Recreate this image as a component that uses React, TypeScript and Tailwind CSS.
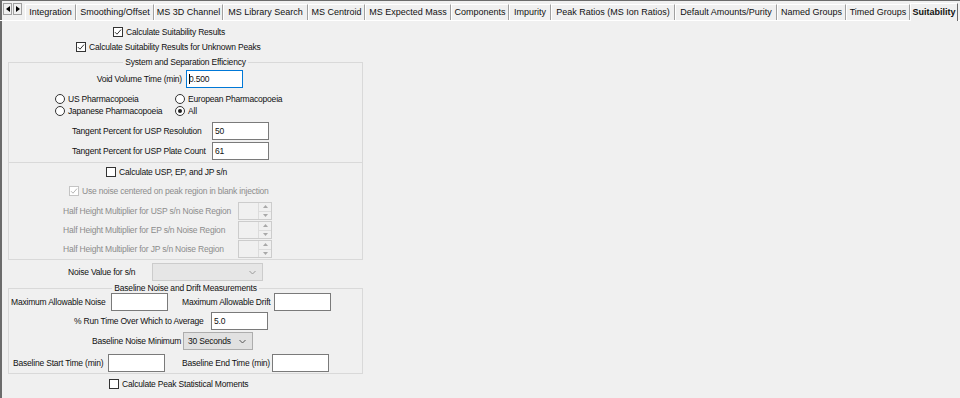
import React from 'react';

const tabs = [
  { name: 'Integration', w: 'w-[51px]' },
  { name: 'Smoothing/Offset', w: 'w-[78px]' },
  { name: 'MS 3D Channel', w: 'w-[69px]' },
  { name: 'MS Library Search', w: 'w-[85px]' },
  { name: 'MS Centroid', w: 'w-[57px]' },
  { name: 'MS Expected Mass', w: 'w-[86px]' },
  { name: 'Components', w: 'w-[58px]' },
  { name: 'Impurity', w: 'w-[42px]' },
  { name: 'Peak Ratios (MS Ion Ratios)', w: 'w-[124px]' },
  { name: 'Default Amounts/Purity', w: 'w-[102px]' },
  { name: 'Named Groups', w: 'w-[69px]' },
  { name: 'Timed Groups', w: 'w-[64px]' },
]

const Checkbox = ({ checked = false, disabled = false }: { checked?: boolean; disabled?: boolean }) => (
  <span
    className={`w-[10px] h-[10px] shrink-0 border bg-white flex items-center justify-center ${
      disabled ? 'border-[#c4c4c4]' : 'border-[#333]'
    }`}
  >
    {checked && (
      <svg width="8" height="8" viewBox="0 0 8 8" fill="none">
        <path d="M1 4.2 L3 6.2 L7 1.6" stroke={disabled ? '#b5b5b5' : '#333'} strokeWidth="1" />
      </svg>
    )}
  </span>
)

const Radio = ({ checked = false }: { checked?: boolean }) => (
  <span className="w-[10px] h-[10px] shrink-0 rounded-full border border-[#333] bg-white flex items-center justify-center">
    {checked && <span className="w-[4px] h-[4px] rounded-full bg-[#222]" />}
  </span>
)

const TextBox = ({ value = '', focused = false }: { value?: string; focused?: boolean }) => (
  <div
    className={`w-[57px] h-[18px] shrink-0 bg-white border flex items-center pl-[2px] ${
      focused ? 'border-[#0078d7]' : 'border-[#7a7a7a]'
    }`}
  >
    {focused && <span className="w-px h-[10px] bg-black -mr-px" />}
    {value}
  </div>
)

const Spinner = () => (
  <div className="w-[34px] h-[18px] shrink-0 bg-[#f0f0f0] border border-[#cccccc] flex">
    <div className="flex-1" />
    <div className="w-[13px] flex flex-col border-l border-[#dcdcdc]">
      <div className="flex-1 flex items-center justify-center border-b border-[#dcdcdc]">
        <svg width="5" height="3" viewBox="0 0 5 3"><path d="M0 3 L2.5 0 L5 3 Z" fill="#a8a8a8" /></svg>
      </div>
      <div className="flex-1 flex items-center justify-center">
        <svg width="5" height="3" viewBox="0 0 5 3"><path d="M0 0 L2.5 3 L5 0 Z" fill="#a8a8a8" /></svg>
      </div>
    </div>
  </div>
)

const Chevron = ({ color }: { color: string }) => (
  <svg width="7" height="5" viewBox="0 0 7 5" fill="none">
    <path d="M0.5 1 L3.5 4 L6.5 1" stroke={color} strokeWidth="1" />
  </svg>
)

const App = () => {
  return (
    <div className="w-[960px] h-[398px] overflow-hidden bg-[#f0f0f0] shadow-[inset_2px_1px_0_#6b6b6b] flex flex-col text-[8.5px] tracking-[-0.2px] leading-none text-[#111] font-['Liberation_Sans',Arial,sans-serif]">
      {/* Tab strip */}
      <div className="h-[21px] shrink-0 flex items-end border-b border-white tracking-normal">
        <div className="self-start mt-[3px] ml-[3px] flex gap-px">
          <div className="w-[9px] h-[12px] border border-[#a0a0a0] bg-[#f0f0f0] flex items-center justify-center">
            <svg width="4" height="6" viewBox="0 0 4 6"><path d="M4 0 L0 3 L4 6 Z" fill="#000" /></svg>
          </div>
          <div className="w-[9px] h-[12px] border border-[#a0a0a0] bg-[#f0f0f0] flex items-center justify-center">
            <svg width="4" height="6" viewBox="0 0 4 6"><path d="M0 0 L4 3 L0 6 Z" fill="#000" /></svg>
          </div>
        </div>
        <div className="ml-[3px] flex items-end text-[9px]">
          {tabs.map((t) => (
            <div
              key={t.name}
              className={`${t.w} h-[16px] flex items-center justify-center whitespace-nowrap border-l border-t border-white border-r border-r-[#a0a0a0]`}
            >
              {t.name}
            </div>
          ))}
          <div className="w-[48px] h-[18px] -mb-px flex items-center justify-center bg-[#f0f0f0] font-bold border-l border-t border-white border-r border-r-[#696969] whitespace-nowrap">
            Suitability
          </div>
        </div>
      </div>

      {/* Top checkboxes */}
      <div className="mt-[5px] ml-[113px] h-[12px] flex items-center gap-[3px]">
        <Checkbox checked />
        <span>Calculate Suitability Results</span>
      </div>
      <div className="mt-[3px] ml-[76px] h-[12px] flex items-center gap-[3px]">
        <Checkbox checked />
        <span>Calculate Suitability Results for Unknown Peaks</span>
      </div>

      {/* System and Separation Efficiency */}
      <div className="mt-[9px] ml-[8px] w-[355px] border border-[#d9d9d9] relative flex flex-col pb-px">
        <div className="absolute left-0 right-0 -top-[5px] flex justify-center">
          <span className="bg-[#f0f0f0] px-[2px]">System and Separation Efficiency</span>
        </div>

        <div className="mt-[7px] h-[18px] flex items-center">
          <span className="w-[173px] text-right">Void Volume Time (min)</span>
          <div className="ml-[4px]">
            <TextBox value="0.500" focused />
          </div>
        </div>

        <div className="mt-[5px] ml-[46px] h-[12px] flex items-center">
          <div className="w-[120px] flex items-center gap-[3px]">
            <Radio />
            <span>US Pharmacopoeia</span>
          </div>
          <div className="flex items-center gap-[3px]">
            <Radio />
            <span>European Pharmacopoeia</span>
          </div>
        </div>
        <div className="ml-[46px] h-[12px] flex items-center">
          <div className="w-[120px] flex items-center gap-[3px]">
            <Radio />
            <span>Japanese Pharmacopoeia</span>
          </div>
          <div className="flex items-center gap-[3px]">
            <Radio checked />
            <span>All</span>
          </div>
        </div>

        <div className="mt-[5px] ml-[63px] h-[18px] flex items-center">
          <span className="w-[140px]">Tangent Percent for USP Resolution</span>
          <TextBox value="50" />
        </div>
        <div className="mt-[2px] ml-[63px] h-[18px] flex items-center">
          <span className="w-[140px]">Tangent Percent for USP Plate Count</span>
          <TextBox value="61" />
        </div>

        {/* s/n section */}
        <div className="mt-[2px] border-t border-[#d9d9d9] flex flex-col">
          <div className="mt-[3px] ml-[97px] h-[12px] flex items-center gap-[3px]">
            <Checkbox />
            <span>Calculate USP, EP, and JP s/n</span>
          </div>
          <div className="mt-[7px] ml-[60px] h-[12px] flex items-center gap-[3px] text-[#8c8c8c]">
            <Checkbox checked disabled />
            <span>Use noise centered on peak region in blank injection</span>
          </div>
          {['USP', 'EP', 'JP'].map((k, i) => (
            <div
              key={k}
              className={`${i === 0 ? 'mt-[5px]' : 'mt-px'} ml-[54px] h-[18px] flex items-center text-[#8c8c8c]`}
            >
              <span className="w-[175px]">Half Height Multiplier for {k} s/n Noise Region</span>
              <Spinner />
            </div>
          ))}
        </div>
      </div>

      {/* Noise value */}
      <div className="mt-[3px] ml-[68px] h-[18px] flex items-center">
        <span className="w-[84px]">Noise Value for s/n</span>
        <div className="w-[111px] h-[18px] bg-[#e6e6e6] border border-[#cccccc] flex items-center justify-end pr-[6px]">
          <Chevron color="#9a9a9a" />
        </div>
      </div>

      {/* Baseline Noise and Drift Measurements */}
      <div className="mt-[7px] ml-[8px] w-[355px] border border-[#d9d9d9] relative flex flex-col pb-px">
        <div className="absolute left-0 right-0 -top-[5px] flex justify-center">
          <span className="bg-[#f0f0f0] px-[2px]">Baseline Noise and Drift Measurements</span>
        </div>

        <div className="mt-[4px] ml-[2px] h-[18px] flex items-center">
          <span className="w-[100px]">Maximum Allowable Noise</span>
          <TextBox />
          <span className="ml-[14px] w-[92px]">Maximum Allowable Drift</span>
          <TextBox />
        </div>
        <div className="mt-[1px] ml-[65px] h-[18px] flex items-center">
          <span className="w-[137px]">% Run Time Over Which to Average</span>
          <TextBox value="5.0" />
        </div>
        <div className="mt-[2px] ml-[83px] h-[18px] flex items-center">
          <span className="w-[91px]">Baseline Noise Minimum</span>
          <div className="w-[70px] h-[18px] bg-[#e1e1e1] border border-[#adadad] flex items-center justify-between pl-[4px] pr-[6px]">
            <span>30 Seconds</span>
            <Chevron color="#555" />
          </div>
        </div>
        <div className="mt-[4px] ml-[4px] h-[18px] flex items-center">
          <span className="w-[95px]">Baseline Start Time (min)</span>
          <TextBox />
          <span className="ml-[17px] w-[90px]">Baseline End Time (min)</span>
          <TextBox />
        </div>
      </div>

      <div className="mt-[4px] ml-[109px] h-[12px] flex items-center gap-[3px]">
        <Checkbox />
        <span>Calculate Peak Statistical Moments</span>
      </div>
    </div>
  )
}

export default App;
